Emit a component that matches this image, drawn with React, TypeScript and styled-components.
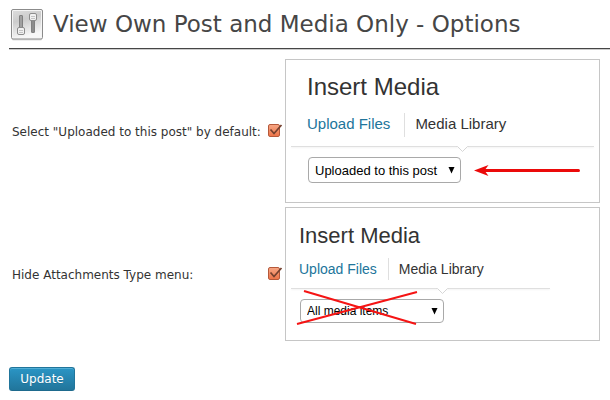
import React, { useState } from "react";
import styled, { createGlobalStyle } from "styled-components";

const GlobalStyle = createGlobalStyle`
  *, *::before, *::after { box-sizing: border-box; }
  body { margin: 0; background: #fff; color: #333; font: 12px/18px "DejaVu Sans", sans-serif; }
`;

type Size = "large" | "small";

const Page = styled.form`
  padding: 0 0 8px 9px;
`;

const Header = styled.header`
  display: flex;
  align-items: center;
  gap: 10px;
  height: 50px;
  padding-left: 2px;
  border-bottom: 1px solid #ccc;
  box-shadow: inset 0 -1px #464646;
`;

const Title = styled.h1`
  margin: 0;
  font-size: 23px;
  line-height: 28px;
  font-weight: 400;
  color: #464646;
  white-space: nowrap;
  padding-bottom: 2px;
`;

const Options = styled.div`
  display: grid;
  gap: 4px;
  padding: 9px 10px 0 3px;
`;

const OptionRow = styled.div`
  display: grid;
  grid-template-columns: 256px 14px minmax(0, 1fr);
  align-items: center;
`;

const OptionLabel = styled.label`
  white-space: nowrap;
  padding-top: 1px;
`;

const CheckWrap = styled.span`
  position: relative;
  display: block;
  width: 14px;
  height: 14px;
`;

const CheckInput = styled.input`
  appearance: none;
  display: block;
  width: 12px;
  height: 13px;
  margin: 0;
  border: 1px solid #b5593a;
  border-radius: 2px;
  background: linear-gradient(#f6a583, #ee7549);
`;

const CheckMark = styled.svg`
  position: absolute;
  left: 0;
  top: -1px;
  pointer-events: none;
`;

const Panel = styled.section<{ $size: Size }>`
  margin-left: 3px;
  border: 1px solid #c6c6c6;
  padding: ${p => (p.$size === "large" ? "13px 5px 19px" : "15px 5px 17px")};
  font-family: "Liberation Sans", sans-serif;
`;

const PanelTitle = styled.h2<{ $size: Size }>`
  margin: 0;
  padding-left: ${p => (p.$size === "large" ? 16 : 8)}px;
  font-size: ${p => (p.$size === "large" ? 24 : 22)}px;
  line-height: ${p => (p.$size === "large" ? 28 : 26)}px;
  font-weight: 400;
`;

const Tabs = styled.nav<{ $size: Size }>`
  display: flex;
  margin-top: ${p => (p.$size === "large" ? 12 : 9)}px;
  padding-left: ${p => (p.$size === "large" ? 16 : 8)}px;
  font-size: ${p => (p.$size === "large" ? 15 : 14)}px;
  line-height: 22px;
`;

const Tab = styled.a<{ $active?: boolean; $size: Size }>`
  color: ${p => (p.$active ? "#333" : "#21759b")};
  text-decoration: none;
  padding-right: ${p => (p.$size === "large" ? 14 : 11)}px;
  padding-bottom: ${p => (p.$size === "large" ? 2 : 0)}px;

  & + & {
    border-left: 1px solid #dfdfdf;
    padding-left: ${p => (p.$size === "large" ? 11 : 10)}px;
  }
`;

const Divider = styled.div<{ $size: Size }>`
  position: relative;
  height: 1px;
  margin-top: ${p => (p.$size === "large" ? 9 : 8)}px;
  margin-right: ${p => (p.$size === "large" ? 0 : 44)}px;
  background: #dfdfdf;
  box-shadow: 0 1px 2px #efefef;
`;

const Notch = styled.svg<{ $size: Size }>`
  position: absolute;
  top: 0;
  left: ${p => (p.$size === "large" ? 165 : 145)}px;
`;

const Controls = styled.div<{ $size: Size }>`
  display: flex;
  align-items: center;
  gap: 13px;
  margin-top: 10px;
  padding-left: ${p => (p.$size === "large" ? 17 : 9)}px;
`;

const SelectWrap = styled.span`
  position: relative;
  display: block;
`;

const Select = styled.select<{ $size: Size }>`
  appearance: none;
  display: block;
  width: ${p => (p.$size === "large" ? 153 : 144)}px;
  height: ${p => (p.$size === "large" ? 26 : 24)}px;
  padding: 0 20px 0 6px;
  border: 1px solid #a9a9a9;
  border-radius: 4px;
  background: #fff;
  color: #000;
  font: ${p => (p.$size === "large" ? 13 : 12)}px "Liberation Sans", sans-serif;
`;

const Caret = styled.svg`
  position: absolute;
  top: 50%;
  right: 6px;
  margin-top: -3px;
  pointer-events: none;
`;

const Cross = styled.svg`
  position: absolute;
  left: -4px;
  top: -10px;
  pointer-events: none;
`;

const Update = styled.button`
  display: block;
  min-width: 66px;
  height: 24px;
  margin-top: 26px;
  padding: 0 10px;
  border: 1px solid #21759b;
  border-bottom-color: #1e6a8d;
  border-radius: 3px;
  background: linear-gradient(#2a95c5, #21759b);
  box-shadow: inset 0 1px #78c8e680;
  color: #fff;
  font: 12px/20px "DejaVu Sans", sans-serif;
  text-shadow: 0 1px 0 #0000001a;
`;

function SlidersIcon() {
  return (
    <svg width="32" height="32" viewBox="0 0 32 32" aria-hidden="true">
      <defs>
        <linearGradient id="plate" x1="0" y1="0" x2="0.3" y2="1">
          <stop offset="0" stopColor="#dcdcdc" />
          <stop offset="0.4" stopColor="#cccccc" />
          <stop offset="1" stopColor="#f7f7f7" />
        </linearGradient>
      </defs>
      <rect x="1" y="1.5" width="30" height="30" rx="1.5" fill="#ddd" />
      <rect x="0.5" y="0.5" width="31" height="29.5" rx="1.5" fill="#f5f5f5" stroke="#8b8b8b" />
      <rect x="2" y="2" width="28" height="26.5" fill="url(#plate)" />
      <rect x="8.5" y="6.5" width="3" height="15" rx="0.5" fill="#a0a0a0" stroke="#808080" />
      <rect x="20.5" y="10.5" width="3" height="13" rx="0.5" fill="#8c8c8c" stroke="#808080" />
      <rect x="6.5" y="18.5" width="7" height="7" rx="1.5" fill="#f1f1f1" stroke="#8c8c8c" />
      <rect x="18.5" y="4.5" width="7" height="7" rx="1.5" fill="#f1f1f1" stroke="#8c8c8c" />
      <path d="M8 21.5h4M8 23.5h4M20 7.5h4M20 9.5h4" stroke="#c4c4c4" />
    </svg>
  );
}

function RedArrow() {
  return (
    <svg width="106" height="12" viewBox="0 0 106 12" aria-hidden="true">
      <path d="M10 6.5H104.5" stroke="#eb0a0a" strokeWidth="3" strokeLinecap="round" />
      <path d="M0 6.5L14.5 1L10.5 6.5L14.5 12Z" fill="#eb0a0a" />
    </svg>
  );
}

interface MediaPanelProps {
  size: Size;
  choices: string[];
  label: string;
  crossed?: boolean;
}

function MediaPanel({ size, choices, label, crossed }: MediaPanelProps) {
  return (
    <Panel $size={size}>
      <PanelTitle $size={size}>Insert Media</PanelTitle>
      <Tabs $size={size}>
        <Tab $size={size} href="#upload">Upload Files</Tab>
        <Tab $size={size} $active href="#library">Media Library</Tab>
      </Tabs>
      <Divider $size={size}>
        <Notch $size={size} width="13" height="7" viewBox="0 0 13 7" aria-hidden="true">
          <path d="M1 0H12V1L6.5 5.5L1 1Z" fill="#fff" />
          <path d="M0.5 0.5H1.5L6.5 5.5L11.5 0.5H12.5" fill="none" stroke="#d6d6d6" />
        </Notch>
      </Divider>
      <Controls $size={size}>
        <SelectWrap>
          <Select $size={size} aria-label={label}>
            {choices.map(c => <option key={c}>{c}</option>)}
          </Select>
          <Caret width="7" height="7" viewBox="0 0 7 7" aria-hidden="true">
            <path d="M0.5 0H6.5L3.5 6.5Z" fill="#000" />
          </Caret>
          {crossed && (
            <Cross width="124" height="36" viewBox="0 0 124 36" aria-hidden="true">
              <path d="M8 2L120 35M1 35L121 3" stroke="#f51414" strokeWidth="2" />
            </Cross>
          )}
        </SelectWrap>
        {!crossed && <RedArrow />}
      </Controls>
    </Panel>
  );
}

interface OptionProps {
  id: string;
  label: string;
  children: React.ReactNode;
}

function Option({ id, label, children }: OptionProps) {
  const [on, setOn] = useState(true);
  return (
    <OptionRow>
      <OptionLabel htmlFor={id}>{label}</OptionLabel>
      <CheckWrap>
        <CheckInput id={id} type="checkbox" checked={on} onChange={e => setOn(e.target.checked)} />
        {on && (
          <CheckMark width="15" height="14" viewBox="0 0 15 14" aria-hidden="true">
            <path d="M2.5 6.5L6 10.5L13.5 2" fill="none" stroke="#74402e" strokeWidth="1.7" />
          </CheckMark>
        )}
      </CheckWrap>
      {children}
    </OptionRow>
  );
}

export default function App() {
  return (
    <>
      <GlobalStyle />
      <Page onSubmit={e => e.preventDefault()}>
        <Header>
          <SlidersIcon />
          <Title>View Own Post and Media Only - Options</Title>
        </Header>
        <Options>
          <Option id="uploaded" label={'Select "Uploaded to this post" by default:'}>
            <MediaPanel size="large" label="Media filter" choices={["Uploaded to this post", "All media items"]} />
          </Option>
          <Option id="hide" label="Hide Attachments Type menu:">
            <MediaPanel size="small" label="Attachment type" choices={["All media items", "Uploaded to this post"]} crossed />
          </Option>
        </Options>
        <Update type="submit">Update</Update>
      </Page>
    </>
  );
}
